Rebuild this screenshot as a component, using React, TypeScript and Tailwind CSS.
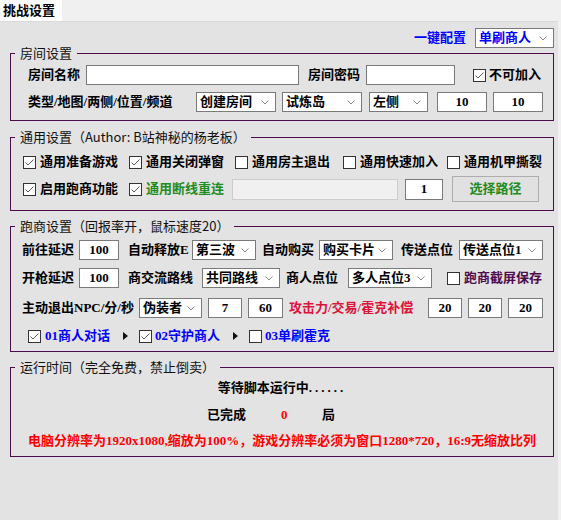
import React from 'react'

const Chevron = () => (
  <svg width="8" height="5" viewBox="0 0 8 5" className="shrink-0">
    <polyline points="0.5,0.5 4,4 7.5,0.5" fill="none" stroke="#8a8a8a" strokeWidth="1" />
  </svg>
)

const Select = ({ w, text, color = '' }: { w: string; text: string; color?: string }) => (
  <div className={`${w} h-[20px] shrink-0 bg-white border border-[#7a7a7a] flex items-center justify-between pl-[3px] pr-[6px] font-bold ${color}`}>
    <span className="whitespace-nowrap">{text}</span>
    <Chevron />
  </div>
)

const Input = ({ w, text = '', h = 'h-[20px]' }: { w: string; text?: string; h?: string }) => (
  <div className={`${w} ${h} shrink-0 bg-white border border-[#7a7a7a] flex items-center justify-center font-bold`}>
    {text}
  </div>
)

const Check = ({ on = false }: { on?: boolean }) => (
  <span className="w-[13px] h-[13px] shrink-0 bg-white border border-[#333333] flex items-center justify-center">
    {on && (
      <svg width="9" height="7" viewBox="0 0 9 7">
        <polyline points="0.5,3.5 3,6 8.5,0.5" fill="none" stroke="#5a5a5a" strokeWidth="1" />
      </svg>
    )}
  </span>
)

const Arrow = () => (
  <svg width="5" height="8" viewBox="0 0 5 8" className="shrink-0">
    <polygon points="0,0 5,4 0,8" fill="#111" />
  </svg>
)

const Group = ({ title, h, mt, children }: { title: string; h: string; mt: string; children: React.ReactNode }) => (
  <div className={`relative ${h} ${mt} border border-[#4e0c4e]`}>
    <span className="absolute -top-[10px] left-[4px] px-[5px] bg-[#e3e3e3] leading-[18px] font-['Noto_Sans_CJK_SC',sans-serif] text-[#111]">
      {title}
    </span>
    {children}
  </div>
)

const Label = ({ w, children, color = '' }: { w: string; children: React.ReactNode; color?: string }) => (
  <span className={`${w} shrink-0 whitespace-nowrap font-bold ${color}`}>{children}</span>
)

export default function App() {
  return (
    <div className="w-[561px] h-[520px] bg-[#f0f0f0] overflow-hidden text-[13px] leading-[18px] text-black font-['Liberation_Serif','Noto_Sans_CJK_SC',serif]">
      {/* tab strip */}
      <div className="h-[21px] flex">
        <div className="w-[62px] h-[21px] bg-white pl-[3px] leading-[21px] font-bold">挑战设置</div>
      </div>

      <div className="w-[558px] h-[499px] bg-[#e3e3e3] border-t border-[#d9d9d9]">
        <div className="ml-[10px] w-[544px]">
          {/* one-key config */}
          <div className="mt-[6px] h-[20px] flex items-center justify-end">
            <span className="font-bold text-[#0000ff]">一键配置</span>
            <div className="ml-[9px]">
              <Select w="w-[79px]" text="单刷商人" color="text-[#0000ff]" />
            </div>
          </div>

          {/* room settings */}
          <Group title="房间设置" h="h-[68px]" mt="mt-[5px]">
            <div className="pt-[11px] pl-[17px]">
              <div className="h-[20px] flex items-center">
                <Label w="w-[58px]">房间名称</Label>
                <Input w="w-[213px]" />
                <Label w="w-[58px] ml-[9px]">房间密码</Label>
                <Input w="w-[89px]" />
                <span className="ml-[18px]"><Check on /></span>
                <Label w="w-[60px] ml-[3px]">不可加入</Label>
              </div>
              <div className="mt-[7px] h-[20px] flex items-center">
                <Label w="w-[168px]">类型/地图/两侧/位置/频道</Label>
                <Select w="w-[80px]" text="创建房间" />
                <div className="ml-[6px]"><Select w="w-[80px]" text="试炼岛" /></div>
                <div className="ml-[7px]"><Select w="w-[59px]" text="左侧" /></div>
                <div className="ml-[9px]"><Input w="w-[50px]" text="10" /></div>
                <div className="ml-[6px]"><Input w="w-[50px]" text="10" /></div>
              </div>
            </div>
          </Group>

          {/* general settings */}
          <Group title="通用设置（Author: B站神秘的杨老板）" h="h-[74px]" mt="mt-[16px]">
            <div className="pt-[14px] pl-[12px]">
              <div className="h-[20px] flex items-center">
                <Check on />
                <Label w="w-[78px] ml-[4px]">通用准备游戏</Label>
                <span className="ml-[11px]"><Check on /></span>
                <Label w="w-[78px] ml-[4px]">通用关闭弹窗</Label>
                <span className="ml-[11px]"><Check /></span>
                <Label w="w-[78px] ml-[4px]">通用房主退出</Label>
                <span className="ml-[13px]"><Check /></span>
                <Label w="w-[78px] ml-[4px]">通用快速加入</Label>
                <span className="ml-[9px]"><Check /></span>
                <Label w="w-[78px] ml-[4px]">通用机甲撕裂</Label>
              </div>
              <div className="mt-[4px] h-[26px] flex items-center">
                <Check on />
                <Label w="w-[78px] ml-[4px]">启用跑商功能</Label>
                <span className="ml-[11px]"><Check on /></span>
                <Label w="w-[78px] ml-[4px]" color="text-[#228b22]">通用断线重连</Label>
                <div className="ml-[8px] w-[166px] h-[21px] bg-[#f0f0f0] border border-[#cccccc]" />
                <div className="ml-[7px]"><Input w="w-[38px]" h="h-[21px]" text="1" /></div>
                <button className="ml-[9px] w-[87px] h-[26px] bg-[#e1e1e1] border border-[#adadad] font-bold text-[#228b22]">
                  选择路径
                </button>
              </div>
            </div>
          </Group>

          {/* trade settings */}
          <Group title="跑商设置（回报率开，鼠标速度20）" h="h-[126px]" mt="mt-[15px]">
            <div className="pt-[13px] pl-[11px]">
              <div className="h-[20px] flex items-center">
                <Label w="w-[57px]">前往延迟</Label>
                <Input w="w-[40px]" text="100" />
                <Label w="w-[64px] ml-[9px]">自动释放E</Label>
                <Select w="w-[64px]" text="第三波" />
                <Label w="w-[57px] ml-[6px]">自动购买</Label>
                <Select w="w-[74px]" text="购买卡片" />
                <Label w="w-[58px] ml-[8px]">传送点位</Label>
                <Select w="w-[84px]" text="传送点位1" />
              </div>
              <div className="mt-[8px] h-[20px] flex items-center">
                <Label w="w-[57px]">开枪延迟</Label>
                <Input w="w-[40px]" text="100" />
                <Label w="w-[74px] ml-[9px]">商交流路线</Label>
                <Select w="w-[78px]" text="共同路线" />
                <Label w="w-[62px] ml-[6px]">商人点位</Label>
                <Select w="w-[84px]" text="多人点位3" />
                <span className="ml-[15px]"><Check /></span>
                <Label w="w-[78px] ml-[4px]" color="text-[#4e0c4e]">跑商截屏保存</Label>
              </div>
              <div className="mt-[10px] h-[20px] flex items-center">
                <Label w="w-[117px]">主动退出NPC/分/秒</Label>
                <Select w="w-[63px]" text="伪装者" />
                <div className="ml-[6px]"><Input w="w-[34px]" text="7" /></div>
                <div className="ml-[6px]"><Input w="w-[35px]" text="60" /></div>
                <Label w="w-[139px] ml-[6px]" color="text-[#dc143c]">攻击力/交易/霍克补偿</Label>
                <Input w="w-[34px]" text="20" />
                <div className="ml-[6px]"><Input w="w-[34px]" text="20" /></div>
                <div className="ml-[6px]"><Input w="w-[35px]" text="20" /></div>
              </div>
              <div className="mt-[8px] h-[20px] flex items-center text-[#0000ff]">
                <span className="ml-[6px]"><Check on /></span>
                <Label w="w-[65px] ml-[4px]">01商人对话</Label>
                <span className="ml-[13px]"><Arrow /></span>
                <span className="ml-[11px]"><Check on /></span>
                <Label w="w-[65px] ml-[3px]">02守护商人</Label>
                <span className="ml-[13px]"><Arrow /></span>
                <span className="ml-[11px]"><Check /></span>
                <Label w="w-[70px] ml-[3px]">03单刷霍克</Label>
              </div>
            </div>
          </Group>

          {/* run time */}
          <Group title="运行时间（完全免费，禁止倒卖）" h="h-[90px]" mt="mt-[15px]">
            <div className="pt-[11px]">
              <div className="h-[18px] flex justify-center font-bold">
                等待脚本运行中<span className="tracking-[3px]">......</span>
              </div>
              <div className="mt-[9px] h-[18px] flex font-bold">
                <span className="ml-[196px] w-[74px]">已完成</span>
                <span className="w-[41px] text-[#ff0000]">0</span>
                <span>局</span>
              </div>
              <div className="mt-[8px] h-[18px] flex justify-center font-bold text-[#ff0000] whitespace-nowrap">
                电脑分辨率为1920x1080,缩放为100%，游戏分辨率必须为窗口1280*720，16:9无缩放比列
              </div>
            </div>
          </Group>
        </div>
      </div>
    </div>
  )
}
